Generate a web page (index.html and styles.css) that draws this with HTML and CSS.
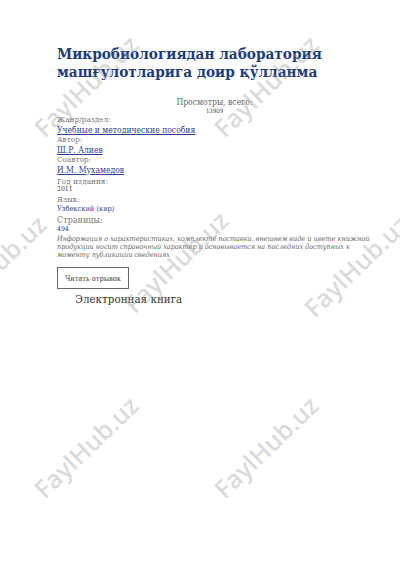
FILE: index.html
```html
<!DOCTYPE html>
<html lang="ru">
<head>
<meta charset="utf-8">
<title>Микробиологиядан лаборатория машғулотларига доир қўлланма</title>
<link rel="stylesheet" href="styles.css">
</head>
<body>
<main class="page">
  <h1 class="title">Микробиологиядан лаборатория машғулотларига доир қўлланма</h1>
  <div class="views">
    <div class="views-label">Просмотры, всего:</div>
    <div class="views-count">13909</div>
  </div>
  <dl class="meta">
    <dt>Жанр/раздел:</dt>
    <dd><a href="#">Учебные и методические пособия</a></dd>
    <dt>Автор:</dt>
    <dd><a href="#">Ш.Р. Алиев</a></dd>
    <dt>Соавтор:</dt>
    <dd><a href="#">И.М. Мухамедов</a></dd>
  </dl>
  <dl class="meta meta-second">
    <dt>Год издания:</dt>
    <dd class="small">2011</dd>
    <dt>Язык:</dt>
    <dd class="value blue">Узбекский (кир)</dd>
    <dt class="big">Страницы:</dt>
    <dd class="small blue">494</dd>
  </dl>
  <p class="note">Информация о характеристиках, комплекте поставки, внешнем виде и цвете книжной продукции носит справочный характер и основывается на последних доступных к моменту публикации сведениях</p>
  <button class="read">Читать отрывок</button>
  <div class="ebook">Электронная книга</div>
</main>
<div class="watermarks">
  <span class="wm wm1">FaylHub.uz</span>
  <span class="wm wm2">FaylHub.uz</span>
  <span class="wm wm3">FaylHub.uz</span>
  <span class="wm wm4">FaylHub.uz</span>
  <span class="wm wm5">FaylHub.uz</span>
  <span class="wm wm6">FaylHub.uz</span>
  <span class="wm wm7">FaylHub.uz</span>
</div>
</body>
</html>
```

FILE: styles.css
```css
html, body {
  margin: 0;
  padding: 0;
  background: #fff;
}
body {
  font-family: "DejaVu Serif Condensed", "DejaVu Serif", serif;
  font-stretch: condensed;
  color: #333;
  width: 400px;
  height: 566px;
  position: relative;
  overflow: hidden;
}
.page {
  width: 315px;
  padding: 45px 0 0 57px;
}
.title {
  margin: 0;
  font-size: 15.2px;
  line-height: 18px;
  font-weight: bold;
  color: #1d3c78;
}
.views {
  margin-top: 16px;
  text-align: center;
  color: #666;
}
.views-label {
  font-size: 8.6px;
  line-height: 10px;
}
.views-count {
  font-size: 6px;
  line-height: 7px;
  color: #333;
}
.meta {
  margin: 1px 0 0 0;
}
.meta-second {
  margin-top: 2px;
}
.meta dt {
  font-size: 8px;
  line-height: 10px;
  color: #777;
  letter-spacing: 0.1px;
}
.meta dt.big {
  font-size: 8.8px;
  line-height: 14px;
}
.meta dd {
  margin: 0;
  font-size: 8.5px;
  line-height: 10px;
}
.meta dd a {
  color: #2c4391;
  text-decoration: underline;
}
.meta dd.small {
  font-size: 6.8px;
  line-height: 5px;
  margin-bottom: 3px;
  color: #333;
}
.meta dd.value {
  font-size: 7.4px;
  line-height: 8px;
}
.meta dd.blue {
  color: #2c4391;
}
.note {
  margin: 1px 0 0 0;
  font-size: 7.2px;
  line-height: 8px;
  font-style: italic;
  color: #666;
}
.read {
  display: block;
  margin-top: 8px;
  padding: 0;
  width: 72px;
  height: 22px;
  border: 1px solid #666;
  background: #fff;
  font-family: "DejaVu Serif Condensed", "DejaVu Serif", serif;
  font-stretch: condensed;
  font-size: 7.4px;
  white-space: nowrap;
  color: #333;
  border-radius: 0;
}
.ebook {
  margin: 3px 0 0 18px;
  font-size: 11.5px;
  line-height: 14px;
  color: #333;
}
.watermarks {
  position: absolute;
  inset: 0;
  pointer-events: none;
}
.wm {
  position: absolute;
  font-family: "Open Sans", sans-serif;
  font-stretch: normal;
  font-weight: 600;
  font-size: 25px;
  line-height: 1;
  color: rgba(150, 150, 150, 0.35);
  white-space: nowrap;
  transform: translate(-50%, -50%) rotate(-44deg);
}
.wm1 { left: 86px; top: 86px; }
.wm2 { left: 266px; top: 86px; }
.wm3 { left: -6px; top: 266px; }
.wm4 { left: 176px; top: 262px; }
.wm5 { left: 356px; top: 266px; }
.wm6 { left: 86px; top: 447px; }
.wm7 { left: 266px; top: 447px; }
```
